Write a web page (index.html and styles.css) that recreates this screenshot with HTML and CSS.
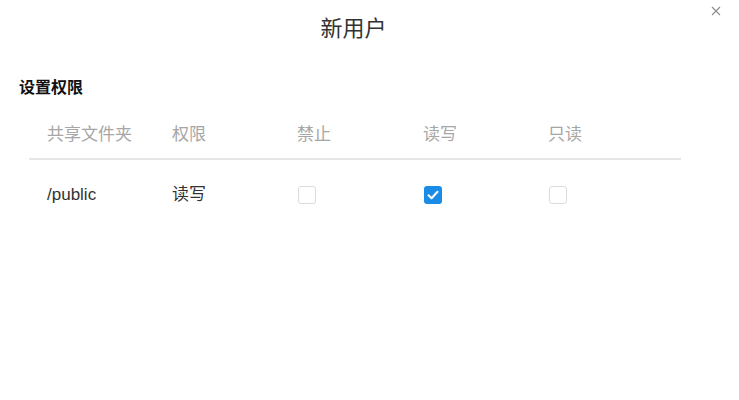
FILE: index.html
```html
<!DOCTYPE html>
<html lang="zh-CN">
<head>
    <meta charset="UTF-8">
    <title>新用户</title>
    <link rel="stylesheet" href="styles.css">
</head>
<body>

<div class="dialog">
    <button class="close" title="关闭">
        <svg width="10" height="10" viewBox="0 0 10 10"><path d="M1 1L9 9M9 1L1 9" stroke="#8c8c8c" stroke-width="1.1" fill="none"/></svg>
    </button>
    <h1 class="title">新用户</h1>

    <h2 class="section">设置权限</h2>
    <div class="perm-table">
        <div class="row head">
            <div class="cell">共享文件夹</div>
            <div class="cell">权限</div>
            <div class="cell">禁止</div>
            <div class="cell">读写</div>
            <div class="cell">只读</div>
        </div>
        <div class="row">
            <div class="cell">/public</div>
            <div class="cell">读写</div>
            <div class="cell"><span class="check"></span></div>
            <div class="cell"><span class="check on">
                <svg width="18" height="18" viewBox="0 0 18 18"><path d="M4.5 9.2L7.6 12.2L13.5 5.8" stroke="#fff" stroke-width="2" fill="none" stroke-linecap="round" stroke-linejoin="round"/></svg>
            </span></div>
            <div class="cell"><span class="check"></span></div>
        </div>
    </div>
</div>

</body>
</html>
```

FILE: styles.css
```css
body {
    margin: 0;
    background-color: #fff;
    font-family: "Liberation Sans", "Noto Sans CJK SC", sans-serif;
    color: #333;
}

.dialog {
    position: relative;
    width: 739px;
    height: 400px;
    padding-top: 13px;
    box-sizing: border-box;
}

.close {
    position: absolute;
    top: 6px;
    right: 18px;
    width: 10px;
    height: 10px;
    padding: 0;
    border: none;
    background: none;
    display: flex;
}

.title {
    margin: 0 32px 0 0;
    text-align: center;
    font-size: 22px;
    font-weight: normal;
    line-height: 32px;
    color: #333;
}

.section {
    margin: 31px 0 0 19px;
    font-size: 16px;
    font-weight: bold;
    line-height: 24px;
    color: #111;
}

.perm-table {
    margin: 11px 0 0 29px;
    width: 652px;
}

.row {
    display: grid;
    grid-template-columns: 125px 125px 126px 125px 1fr;
    align-items: center;
    height: 70px;
}

.row.head {
    height: 47px;
    border-bottom: 2px solid #e6e6e6;
    color: #a6a6a6;
}

.cell {
    padding-left: 18px;
    font-size: 17px;
    line-height: 24px;
}

.check {
    display: block;
    width: 16px;
    height: 16px;
    margin-left: 1px;
    border: 1px solid #dcdcdc;
    border-radius: 3px;
    background-color: #fff;
}

.check.on {
    width: 18px;
    height: 18px;
    border: none;
    background-color: #1a8ce6;
}

.check.on svg {
    display: block;
}
```
